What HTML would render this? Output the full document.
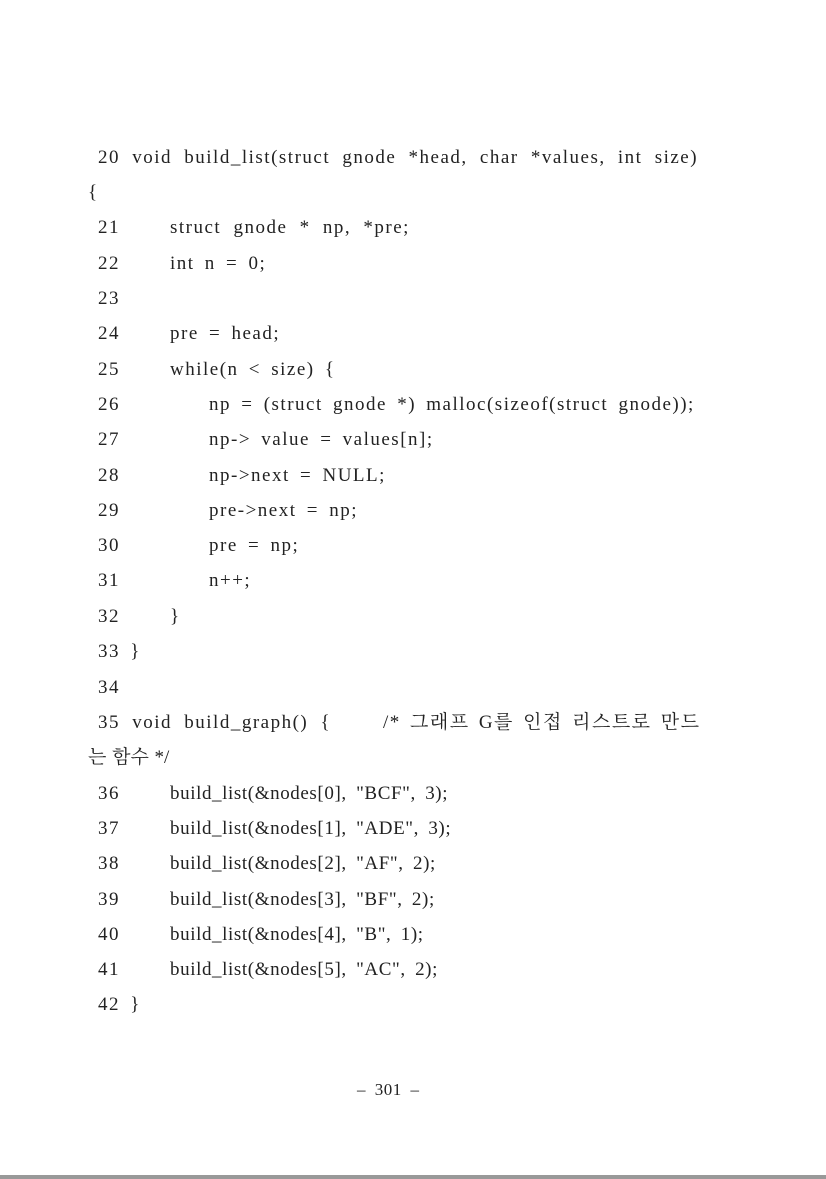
<!DOCTYPE html>
<html><head><meta charset="utf-8"><style>
html,body{margin:0;padding:0;background:#fff;}
body{width:826px;height:1179px;position:relative;overflow:hidden;font-family:"Liberation Serif","Noto Serif CJK SC",serif;font-size:19px;color:#222;}
.l{position:absolute;line-height:24px;white-space:pre;word-spacing:4px;letter-spacing:1.5px;}
.b{letter-spacing:0.6px;word-spacing:4px;}
.bar{position:absolute;left:0;right:0;top:1175px;height:4px;background:#999;}
</style></head><body>
<div class="l" style="left:98px;top:146px;word-spacing:6px">20 void build_list(struct gnode *head, char *values, int size)</div>
<div class="l" style="left:88px;top:181px">{</div>
<div class="l" style="left:98px;top:216px">21</div><div class="l" style="left:170px;top:216px;word-spacing:6px">struct gnode * np, *pre;</div>
<div class="l" style="left:98px;top:252px">22</div><div class="l" style="left:170px;top:252px">int n = 0;</div>
<div class="l" style="left:98px;top:287px">23</div>
<div class="l" style="left:98px;top:322px">24</div><div class="l" style="left:170px;top:322px">pre = head;</div>
<div class="l" style="left:98px;top:358px">25</div><div class="l" style="left:170px;top:358px">while(n &lt; size) {</div>
<div class="l" style="left:98px;top:393px">26</div><div class="l" style="left:209px;top:393px;letter-spacing:1.5px">np = (struct gnode *) malloc(sizeof(struct gnode));</div>
<div class="l" style="left:98px;top:428px">27</div><div class="l" style="left:209px;top:428px">np-&gt; value = values[n];</div>
<div class="l" style="left:98px;top:464px">28</div><div class="l" style="left:209px;top:464px">np-&gt;next = NULL;</div>
<div class="l" style="left:98px;top:499px">29</div><div class="l" style="left:209px;top:499px">pre-&gt;next = np;</div>
<div class="l" style="left:98px;top:534px">30</div><div class="l" style="left:209px;top:534px">pre = np;</div>
<div class="l" style="left:98px;top:569px">31</div><div class="l" style="left:209px;top:569px">n++;</div>
<div class="l" style="left:98px;top:605px">32</div><div class="l" style="left:170px;top:605px">}</div>
<div class="l" style="left:98px;top:640px">33 }</div>
<div class="l" style="left:98px;top:676px">34</div>
<div class="l" style="left:98px;top:711px;word-spacing:6px">35 void build_graph() {</div>
<div class="l" style="left:383px;top:711px;word-spacing:3px">/* 그래프 G를 인접 리스트로 만드</div>
<div class="l" style="left:88px;top:746px;letter-spacing:0;word-spacing:1px">는 함수 */</div>
<div class="l" style="left:98px;top:782px">36</div><div class="l b" style="left:170px;top:782px">build_list(&amp;nodes[0], "BCF", 3);</div>
<div class="l" style="left:98px;top:817px">37</div><div class="l b" style="left:170px;top:817px">build_list(&amp;nodes[1], "ADE", 3);</div>
<div class="l" style="left:98px;top:852px">38</div><div class="l b" style="left:170px;top:852px">build_list(&amp;nodes[2], "AF", 2);</div>
<div class="l" style="left:98px;top:888px">39</div><div class="l b" style="left:170px;top:888px">build_list(&amp;nodes[3], "BF", 2);</div>
<div class="l" style="left:98px;top:923px">40</div><div class="l b" style="left:170px;top:923px">build_list(&amp;nodes[4], "B", 1);</div>
<div class="l" style="left:98px;top:958px">41</div><div class="l b" style="left:170px;top:958px">build_list(&amp;nodes[5], "AC", 2);</div>
<div class="l" style="left:98px;top:993px">42 }</div>
<div class="l" style="left:357px;top:1078px;font-size:17px;word-spacing:4px;letter-spacing:0.5px">– 301 –</div>
<div class="bar"></div>
</body></html>
